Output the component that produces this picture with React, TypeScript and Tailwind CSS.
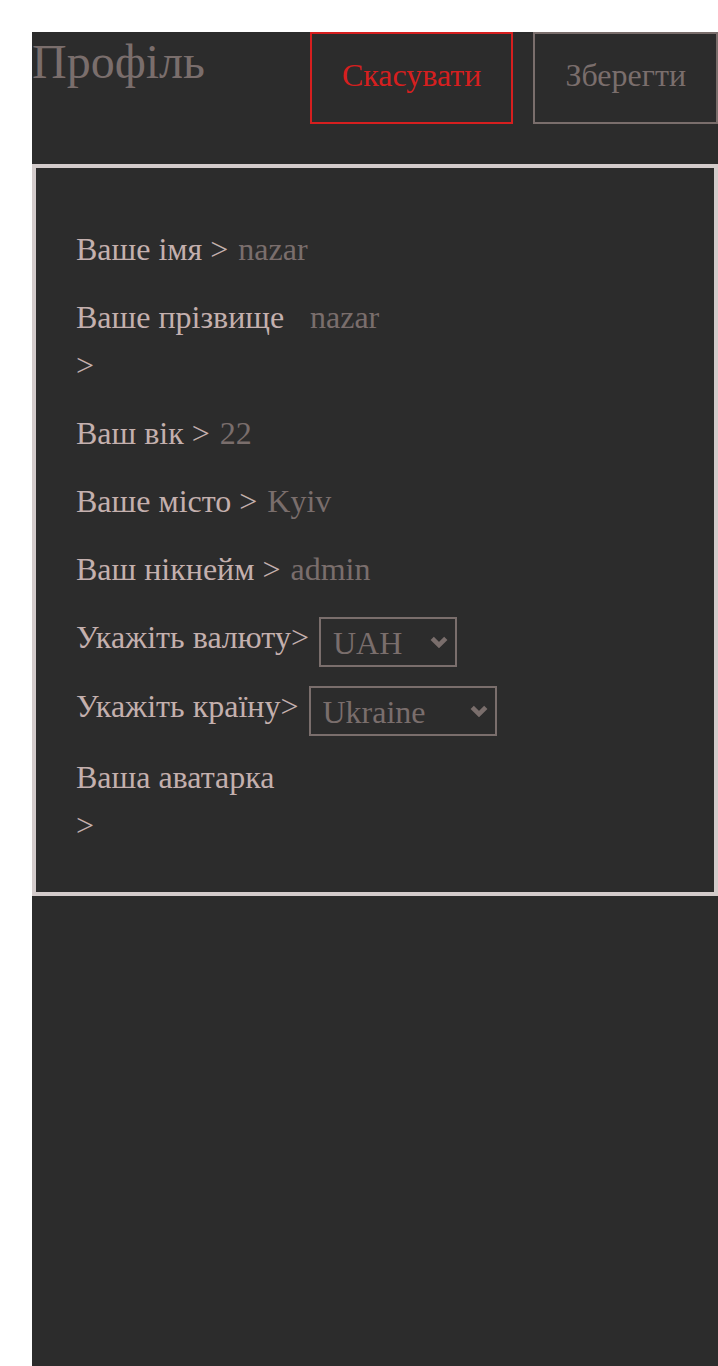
import React from "react";

function Chevron() {
  return (
    <svg
      className="pointer-events-none absolute right-[9px] top-1/2 -translate-y-1/2"
      width="18"
      height="13"
      viewBox="0 0 18 13"
      fill="none"
    >
      <polyline points="2.2,2.8 9,9.6 15.8,2.8" stroke="#7a6e6c" strokeWidth="4.6" strokeLinejoin="miter" />
    </svg>
  );
}

function TextRow({ label, value, twoLine }: { label: string; value: string; twoLine?: boolean }) {
  return (
    <div className={`flex items-start gap-[10px] ${twoLine ? "h-[96px]" : "h-[48px]"}`}>
      <span className="min-w-0 text-[#c4b0ae]">{label}</span>
      <input
        defaultValue={value}
        className="h-[48px] w-[364px] shrink-0 bg-transparent p-0 font-['Liberation_Serif',serif] leading-[48px] text-[#7a6e6c] outline-none"
      />
    </div>
  );
}

function SelectRow({
  label,
  options,
  width,
  h,
}: {
  label: string;
  options: string[];
  width: string;
  h: string;
}) {
  return (
    <div className={`flex items-start gap-[10px] ${h}`}>
      <span className="text-[#c4b0ae]">{label}</span>
      <div className={`relative mt-[4px] shrink-0 ${width}`}>
        <select className="h-[50px] w-full appearance-none border-2 border-[#7a6e6c] bg-transparent pb-[10px] pl-[12px] pt-0 font-['Liberation_Serif',serif] text-[32px] leading-normal text-[#7a6e6c] outline-none">
          {options.map((o) => (
            <option key={o} value={o} className="bg-[#2c2c2c]">
              {o}
            </option>
          ))}
        </select>
        <Chevron />
      </div>
    </div>
  );
}

export default function App() {
  return (
    <div className="min-h-screen bg-white pl-[32px] pt-[32px] font-['Liberation_Serif',serif]">
      <div className="min-h-[calc(100vh-32px)] bg-[#2c2c2c]">
        <header className="mb-[40px] flex items-start justify-between">
          <h1 className="text-[48px] leading-[60px] text-[#7a6e6c]">Профіль</h1>
          <div className="flex gap-[20px]">
            <button className="box-border h-[92px] border-2 border-[#d61f1f] px-[30px] pb-[6px] font-['Liberation_Serif',serif] text-[32px] leading-[48px] text-[#d61f1f]">
              Скасувати
            </button>
            <button className="box-border h-[92px] border-2 border-[#7a6e6c] px-[30px] pb-[6px] font-['Liberation_Serif',serif] text-[32px] leading-[48px] text-[#7a6e6c]">
              Зберегти
            </button>
          </div>
        </header>
        <section className="border-4 border-[#d3cbcb] px-[40px] pb-[43px] pt-[57px] text-[32px] leading-[48px]">
          <div className="flex flex-col gap-[20px]">
            <TextRow label="Ваше імя >" value="nazar" />
            <TextRow label="Ваше прізвище >" value="nazar" twoLine />
            <TextRow label="Ваш вік >" value="22" />
            <TextRow label="Ваше місто >" value="Kyiv" />
            <TextRow label="Ваш нікнейм >" value="admin" />
            <SelectRow label="Укажіть валюту>" options={["UAH", "USD", "EUR"]} width="w-[138px]" h="h-[49px]" />
            <SelectRow label="Укажіть країну>" options={["Ukraine", "Poland", "Germany"]} width="w-[188px]" h="h-[51px]" />
            <div className="flex h-[96px] items-start gap-[10px]">
              <span className="min-w-0 text-[#c4b0ae]">Ваша аватарка &gt;</span>
              <input type="file" accept="image/*" className="h-[48px] w-[370px] shrink-0 opacity-0" />
            </div>
          </div>
        </section>
      </div>
    </div>
  );
}
